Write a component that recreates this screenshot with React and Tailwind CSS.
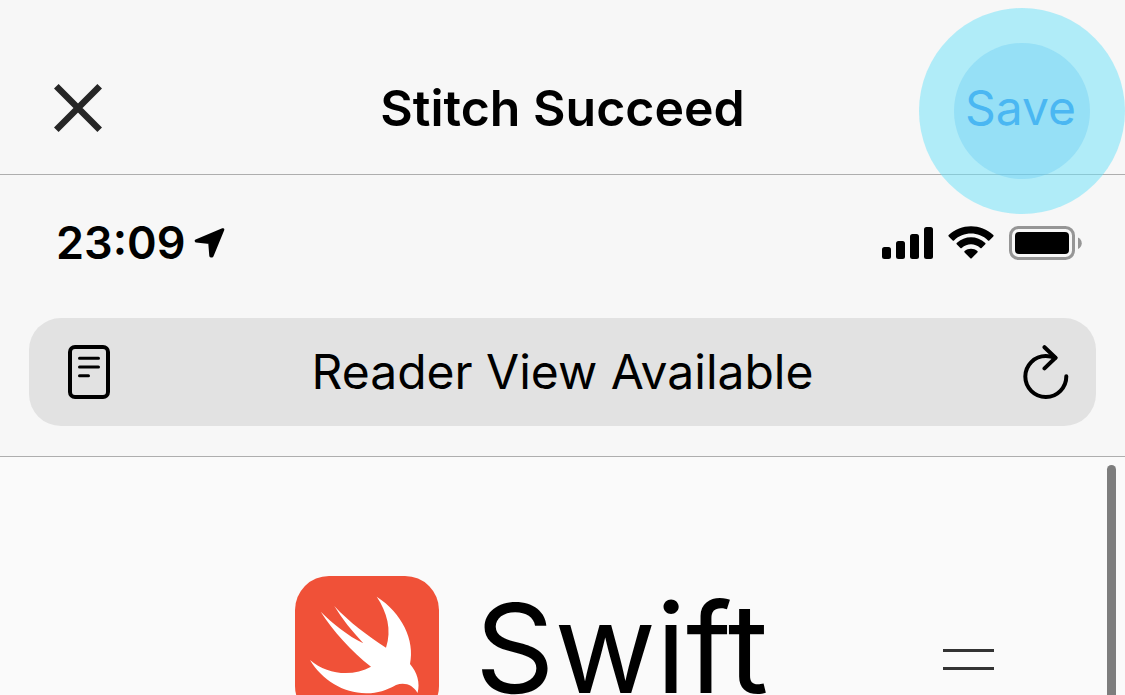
function CloseIcon() {
  return (
    <svg className="block size-12" viewBox="0 0 48 48" fill="none" stroke="#262626" strokeWidth="6.5" aria-hidden="true">
      <path d="M2.300 2.300 45.700 45.700M45.700 2.300 2.300 45.700" />
    </svg>
  );
}

function LocationIcon() {
  return (
    <svg className="h-8 w-8" viewBox="0 0 32 32" aria-hidden="true">
      <path d="M28.800 2.700 2.200 14 15.700 15.500 16.800 29 18 29 28.800 2.700Z" fill="#000" stroke="#000" strokeWidth="3" strokeLinejoin="round" />
    </svg>
  );
}

function SignalIcon() {
  return (
    <svg className="h-8 w-[51px]" viewBox="0 0 51 32" aria-hidden="true">
      <rect x="0" y="20" width="9" height="12" rx="2.5" />
      <rect x="14" y="14" width="9" height="18" rx="2.5" />
      <rect x="28" y="7" width="9" height="25" rx="2.5" />
      <rect x="42" y="0" width="9" height="32" rx="2.5" />
    </svg>
  );
}

function WifiIcon() {
  return (
    <svg className="h-[34px] w-[46px]" viewBox="0 0 46 34" aria-hidden="true">
      <path d="M.7 9.1C13-2.700 33-2.700 45.300 9.100c.4.4.4.900 0 1.300L41.300 14.400c-.4.4-.9.4-1.300 0C30.500 5.300 15.500 5.300 6 14.400c-.4.4-.9.4-1.300 0L.7 10.400c-.4-.4-.4-.9 0-1.300Z" />
      <path d="M8.700 17C17 9.200 29 9.200 37.300 17c.4.4.4.900 0 1.300L33.600 22c-.4.4-.9.4-1.300 0-5.700-5-12.900-5-18.600 0-.4.4-.9.4-1.300 0l-3.700-3.700c-.4-.4-.4-.9 0-1.300Z" />
      <path d="M16.600 25.100c3.700-3 9.100-3 12.800 0 .4.4.4.9 0 1.300L23.700 32.300c-.4.4-1 .4-1.400 0l-5.700-5.900c-.4-.4-.4-.9 0-1.300Z" />
    </svg>
  );
}

function BatteryIcon() {
  return (
    <svg className="h-[34px] w-[73px]" viewBox="0 0 73 34" aria-hidden="true">
      <rect x="1.500" y="1.500" width="63" height="31" rx="8" fill="none" stroke="#969696" strokeWidth="3" />
      <rect x="6" y="6" width="54" height="22" rx="4" />
      <path d="M69 11.500c5 2.500 5 9 0 11.500Z" fill="#969696" />
    </svg>
  );
}

function ReaderIcon() {
  return (
    <svg className="block h-[54px] w-[42px]" viewBox="0 0 42 54" fill="none" stroke="#000" aria-hidden="true">
      <rect x="2" y="2" width="38" height="50" rx="5" strokeWidth="4" />
      <path d="M11.500 13.300h19M11.500 22h19M11.500 30.700h9" strokeWidth="3" strokeLinecap="round" />
    </svg>
  );
}

function ReloadIcon() {
  return (
    <svg className="block h-[54px] w-[46px]" viewBox="0 0 46 54" fill="none" stroke="#000" strokeWidth="4" strokeLinecap="round" strokeLinejoin="round" aria-hidden="true">
      <path d="M43.300 31.200A20.500 20.500 0 1 1 22.800 11q5 0 9.500 1.800" />
      <path d="M21.500 2.200 32.500 12.800 21.500 23.400" />
    </svg>
  );
}

function SwiftLogo() {
  return (
    <svg className="size-36 shrink-0" viewBox="0 0 144 144" aria-hidden="true">
      <rect width="144" height="144" rx="34" fill="#f05138" />
      <path
        fill="#fff"
        d="M81.700 20.700C107 37 120 64 115 88C122 96 125.500 107 122.500 117C118 109 110 106 101 109C91 114.500 82 117.500 71 117.300C48 117 27 104 15 84C32 99 58 101 76 90.700C56 75 38 55 25.700 35.700C37 47 53 60 68.300 67.300C57 55 47 43 39.300 30C54 46 73 60 91 71.700C97 54 92 36 81.700 20.700Z"
      />
    </svg>
  );
}

export default function App() {
  return (
    <div className="flex h-screen flex-col overflow-hidden bg-[#f7f7f7] font-['Inter',sans-serif] text-black">
      <header className="grid grid-cols-[1fr_auto_1fr] items-center border-b border-[#aeaeae] px-[49px] pt-[72px] pb-[30px]">
        <button type="button" aria-label="Close" className="justify-self-start px-[5px]">
          <CloseIcon />
        </button>
        <h1 className="text-[50px] leading-[72px] font-semibold">Stitch Succeed</h1>
        <button type="button" className="relative justify-self-end text-[48px] leading-[72px] text-[#1e82ea]">
          Save
          <span className="pointer-events-none absolute -top-16 -right-[49px] z-10 flex size-[206px] items-center justify-center rounded-full bg-[#69e2fa]/50">
            <span className="size-[136px] rounded-full bg-[#59c5f3]/30" />
          </span>
        </button>
      </header>

      <div className="flex items-center justify-between pt-8 pr-[43px] pl-14">
        <div className="flex items-center gap-2 text-[45px] leading-[72px] font-semibold">
          <time>23:09</time>
          <LocationIcon />
        </div>
        <div className="flex items-center gap-[15px]">
          <SignalIcon />
          <WifiIcon />
          <BatteryIcon />
        </div>
      </div>

      <div className="border-b border-[#aeaeae] px-[29px] pt-[39px] pb-[30px]">
        <div className="grid h-[108px] grid-cols-[1fr_auto_1fr] items-center rounded-[32px] bg-[#e2e2e2] px-[27px]">
          <button type="button" aria-label="Show reader view" className="justify-self-start pl-3">
            <ReaderIcon />
          </button>
          <span className="text-[48px] leading-[72px]">Reader View Available</span>
          <button type="button" aria-label="Reload" className="justify-self-end">
            <ReloadIcon />
          </button>
        </div>
      </div>

      <main className="flex min-h-0 flex-1 items-start justify-end overflow-hidden bg-[#fafafa] pt-2 pr-[9px]">
        <div className="flex flex-1 items-center pt-[111px] pl-[295px]">
          <a href="#swift" className="flex h-36 items-center gap-9">
            <SwiftLogo />
            <span className="text-[124px] leading-36">Swift</span>
          </a>
          <button type="button" aria-label="Menu" className="mt-[22px] mr-[113px] ml-auto flex h-12 w-[51px] shrink-0 flex-col justify-center gap-[15px]">
            <span className="h-[3px] w-full bg-[#333]" />
            <span className="h-[3px] w-full bg-[#333]" />
          </button>
        </div>
        <div className="h-screen w-[9px] shrink-0 rounded-full bg-[#7d7d7d]" />
      </main>
    </div>
  );
}
